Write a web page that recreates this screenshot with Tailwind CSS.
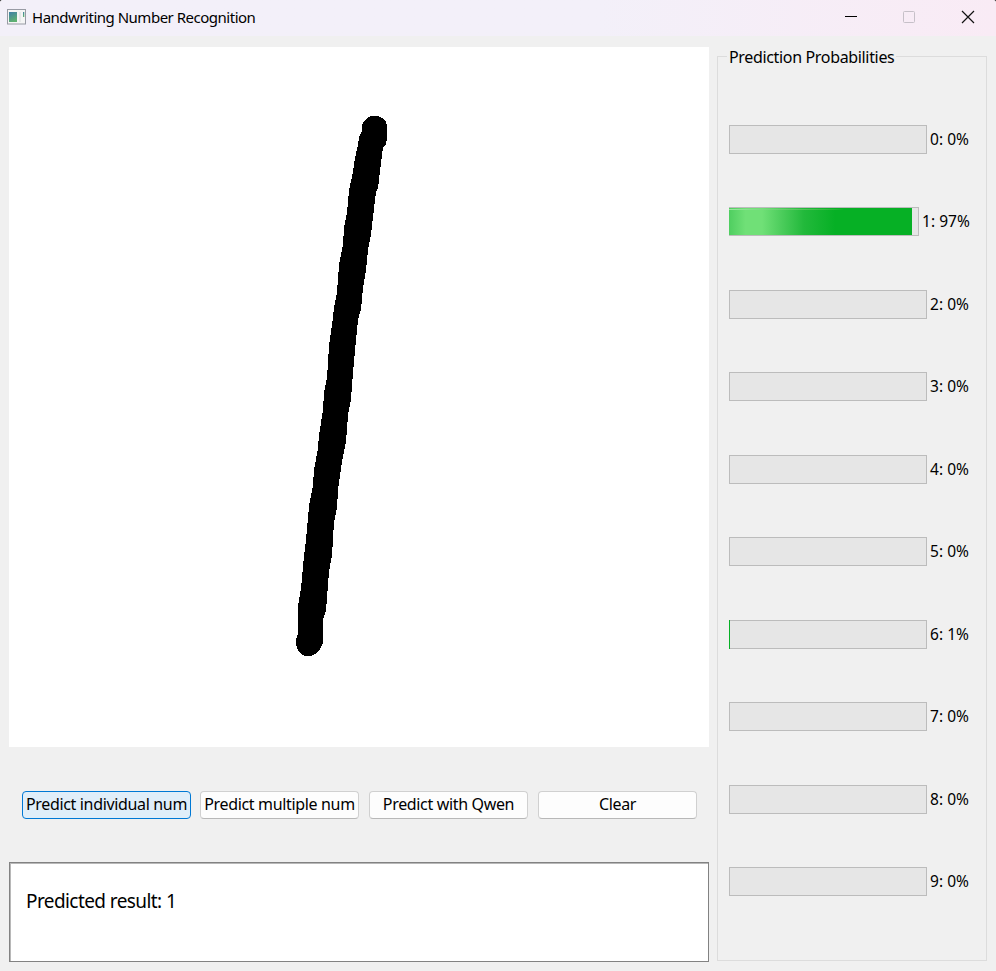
<!DOCTYPE html>
<html lang="en">
<head>
<meta charset="utf-8">
<title>Handwriting Number Recognition</title>
<script src="https://cdn.jsdelivr.net/npm/@tailwindcss/browser@4"></script>
</head>
<body class="bg-[#2b2b2b]">
<div class="flex h-[971px] w-[996px] flex-col overflow-hidden rounded-t-[3px] bg-[#f0f0f0] font-['Noto_Sans','Open_Sans',sans-serif] text-[16px] leading-[22px] text-black">
  <header class="flex h-9 shrink-0 items-center bg-linear-to-r from-[#f3f0f9] from-60% to-[#f9ebf5] pl-[7px]">
    <svg class="mb-[2px] h-4 w-[19px]" viewBox="0 0 19 16">
      <defs><linearGradient id="app" x1="0" y1="0" x2=".4" y2="1"><stop stop-color="#3f7fa8"/><stop offset="1" stop-color="#5fb071"/></linearGradient></defs>
      <rect x=".5" y=".5" width="18" height="14.5" fill="#f5f5f5" stroke="#989ba4"/>
      <rect x="2" y="3" width="8" height="10" fill="url(#app)"/>
      <rect x="12" y="3" width="2" height="10" fill="#e6e8e8"/>
      <rect x="16" y="3" width="1.3" height="5" fill="url(#app)"/>
    </svg>
    <span class="mb-[2px] ml-[6px] whitespace-nowrap text-[15px] tracking-[-0.49px]">Handwriting Number Recognition</span>
    <svg class="ml-auto h-9 w-[170px]" viewBox="0 0 170 36" fill="none">
      <path d="M19 16.5h12" stroke="#000"/>
      <rect x="77.5" y="11.5" width="11" height="11" rx="1" stroke="#c6c0c8"/>
      <path d="M136 11l12 12M148 11l-12 12" stroke="#111" stroke-width="1.2"/>
    </svg>
  </header>
  <main class="flex min-h-0 grow pt-[11px] pl-[9px]">
    <section class="flex w-[700px] flex-col">
      <svg class="h-[700px] w-[700px] shrink-0 bg-white" viewBox="9 47 700 700" fill="#000">
        <polygon shape-rendering="crispEdges" points="362,125 364,121 367,118 371,116 378,116 382,118 386,122 387,125 387,139 386,144 383,147 381,163 378,188 376,192 373,217 371,234 368,250 366,270 363,288 361,309 358,320 355,350 352,385 351,400 348,415 346,442 342,461 338,490 337,508 334,522 332,555 329,572 326,610 323,620 323,643 320,649 315,654 311,656 305,656 301,654 298,650 296,645 296,639 298,634 298,606 301,588 304,556 306,540 309,506 313,485 314,470 318,448 319,435 323,410 324,393 327,378 329,346 332,325 334,308 337,292 339,265 343,245 344,228 347,213 349,190 353,172 355,158 358,145 359,137 362,131"/>
      </svg>
      <div class="mt-11 ml-[13px] flex h-7 gap-[10px] whitespace-nowrap">
        <button class="-mr-px flex w-[169px] items-center justify-center rounded-[4px] border border-[#0078d4] bg-[#e0eef9] pb-[2px] tracking-[-0.34px]">Predict individual num</button>
        <button class="flex w-[159px] items-center justify-center rounded-[4px] border border-[#d0d0d0] border-b-[#b8b8b8] bg-[#fdfdfd] pb-[2px] tracking-[-0.34px]">Predict multiple num</button>
        <button class="flex w-[159px] items-center justify-center rounded-[4px] border border-[#d0d0d0] border-b-[#b8b8b8] bg-[#fdfdfd] pb-[2px] tracking-[-0.34px]">Predict with Qwen</button>
        <button class="flex w-[159px] items-center justify-center rounded-[4px] border border-[#d0d0d0] border-b-[#b8b8b8] bg-[#fdfdfd] pb-[2px] tracking-[-0.34px]">Clear</button>
      </div>
      <div class="mt-[43px] h-[100px] border border-[#828282] bg-white shadow-[inset_1px_1px_0_#b8b8b8]">
        <p class="mt-[25px] ml-4 text-[19px] leading-[26px] tracking-[-0.58px]">Predicted result: 1</p>
      </div>
    </section>
    <fieldset class="mt-[-1px] ml-2 flex h-[915px] w-[270px] flex-col border border-[#dcdcdc] pl-[11px]">
      <legend class="-ml-[2px] h-[20px] px-[2px] leading-[22px] tracking-[-0.34px] whitespace-nowrap">Prediction Probabilities</legend>
      <div id="rows" class="mt-[59px] flex h-[771px] flex-col justify-between"></div>
    </fieldset>
  </main>
</div>
<script>
  const values = [0, 97, 0, 0, 0, 0, 1, 0, 0, 0];
  document.getElementById('rows').innerHTML = values.map((v, i) => {
    const width = v > 9 ? 190 : 198;
    const fill = v > 9
      ? '<div class="relative -ml-px h-full w-[183px]"><div class="h-full bg-[linear-gradient(90deg,#4fce60_0%,#70e077_9%,#70e077_18%,#4bcc5b_29%,#22b93b_41%,#06b025_58%)]"></div><div class="absolute top-px left-0 h-px w-[115px] bg-linear-to-r from-[#9be8a0] to-[#06b025]"></div></div>'
      : v > 0 ? '<div class="relative -top-px -ml-px h-[29px] w-px bg-[#06b025]"></div>' : '';
    return `<div class="flex h-[29px] items-center"><div class="box-border h-[29px] shrink-0 border border-[#bcbcbc] bg-[#e6e6e6]" style="width:${width}px">${fill}</div><span class="mb-px ml-[3px] whitespace-nowrap text-[15.5px] tracking-[0.05px]">${i}: ${v}%</span></div>`;
  }).join('');
</script>
</body>
</html>
